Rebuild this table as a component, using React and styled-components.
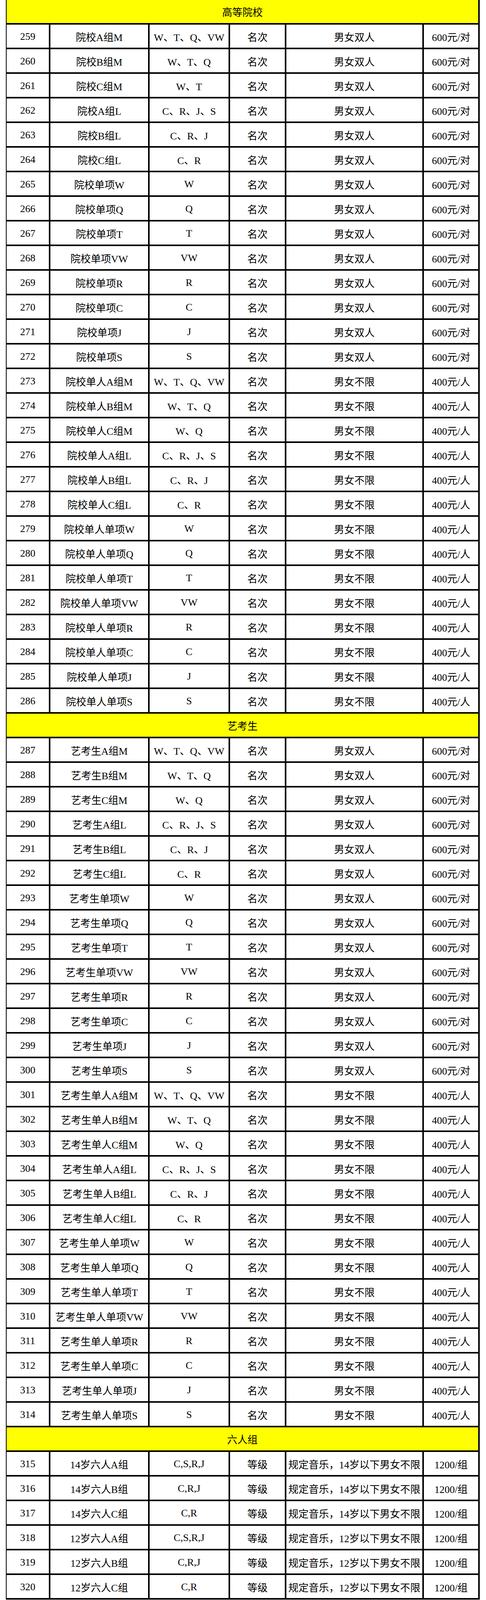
import React from 'react';
import styled, { createGlobalStyle } from 'styled-components';

const GlobalStyle = createGlobalStyle`
  body {
    margin: 0;
    background: #ffffff;
  }
`;

// the photographed viewport is only 4096px tall, so row height is squeezed
// to keep all 65 rows of the sheet in the frame
const S = {
  Page: styled.div`
    width: 1244px;
    background: #ffffff;
  `,

  Table: styled.div`
    margin-left: 15px;
    width: 1213px;
    box-sizing: border-box;
    border-left: 2px solid #000;
    border-right: 4px solid #000;
    font-family: 'Liberation Serif', 'Noto Sans CJK SC', serif;
    font-size: 26px;
    color: #000;
  `,

  SectionRow: styled.div`
    height: 59px;
    background: #ffff00;
    border-bottom: 4px solid #000;
    display: flex;
    align-items: center;
    justify-content: center;
  `,

  Row: styled.div`
    height: 59px;
    display: grid;
    grid-template-columns: 108px 250px 202px 140px 348px 139px;
    column-gap: 4px;
    background: #000;
    border-bottom: 4px solid #000;
  `,

  Cell: styled.div`
    background: #ffffff;
    display: flex;
    align-items: center;
    justify-content: center;
    white-space: nowrap;
    padding-top: 2px;
    box-sizing: border-box;
  `,
};

const pairs = ['A组M', 'B组M', 'C组M', 'A组L', 'B组L', 'C组L'];
const pairDances = ['W、T、Q、VW', 'W、T、Q', 'W、T', 'C、R、J、S', 'C、R、J', 'C、R'];
const soloDances = ['W、T、Q、VW', 'W、T、Q', 'W、Q', 'C、R、J、S', 'C、R、J', 'C、R'];
const singles = ['W', 'Q', 'T', 'VW', 'R', 'C', 'J', 'S'];

function buildSection(prefix, start, pairSet) {
  const rows = [];
  let n = start;
  pairs.forEach((p, i) => {
    rows.push([n++, prefix + p, pairSet[i], '名次', '男女双人', '600元/对']);
  });
  singles.forEach((s) => {
    rows.push([n++, prefix + '单项' + s, s, '名次', '男女双人', '600元/对']);
  });
  pairs.forEach((p, i) => {
    rows.push([n++, prefix + '单人' + p, soloDances[i], '名次', '男女不限', '400元/人']);
  });
  singles.forEach((s) => {
    rows.push([n++, prefix + '单人单项' + s, s, '名次', '男女不限', '400元/人']);
  });
  return rows;
}

const sixRows = [
  [315, '14岁六人A组', 'C,S,R,J', '等级', '规定音乐，14岁以下男女不限', '1200/组'],
  [316, '14岁六人B组', 'C,R,J', '等级', '规定音乐，14岁以下男女不限', '1200/组'],
  [317, '14岁六人C组', 'C,R', '等级', '规定音乐，14岁以下男女不限', '1200/组'],
  [318, '12岁六人A组', 'C,S,R,J', '等级', '规定音乐，12岁以下男女不限', '1200/组'],
  [319, '12岁六人B组', 'C,R,J', '等级', '规定音乐，12岁以下男女不限', '1200/组'],
  [320, '12岁六人C组', 'C,R', '等级', '规定音乐，12岁以下男女不限', '1200/组'],
];

const sections = [
  { title: '高等院校', rows: buildSection('院校', 259, pairDances) },
  { title: '艺考生', rows: buildSection('艺考生', 287, soloDances) },
  { title: '六人组', rows: sixRows },
];

export default function App() {
  return (
    <S.Page>
      <GlobalStyle />
      <S.Table>
        {sections.map((section) => (
          <React.Fragment key={section.title}>
            <S.SectionRow>{section.title}</S.SectionRow>
            {section.rows.map((row) => (
              <S.Row key={row[0]}>
                {row.map((value, ci) => (
                  <S.Cell key={ci}>{value}</S.Cell>
                ))}
              </S.Row>
            ))}
          </React.Fragment>
        ))}
      </S.Table>
    </S.Page>
  );
}
